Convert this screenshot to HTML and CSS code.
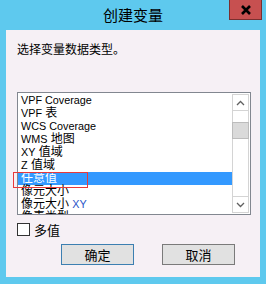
FILE: index.html
```html
<!DOCTYPE html>
<html lang="zh-CN">
<head>
    <meta charset="UTF-8">
    <title>创建变量</title>
    <link rel="stylesheet" href="styles.css">
</head>
<body>
    <div class="window">
        <div class="titlebar">
            <div class="title">创建变量</div>
            <div class="close-btn">
                <svg width="12" height="10" viewBox="0 0 12 10">
                    <path d="M2 1 L10 9 M10 1 L2 9" stroke="#000" stroke-width="2.6" fill="none"/>
                </svg>
            </div>
        </div>
        <div class="client">
            <div class="prompt">选择变量数据类型。</div>
            <div class="listbox">
                <div class="items">
                    <div class="item"><span class="en">VPF Coverage</span></div>
                    <div class="item"><span class="en">VPF</span> 表</div>
                    <div class="item"><span class="en">WCS Coverage</span></div>
                    <div class="item"><span class="en">WMS</span> 地图</div>
                    <div class="item"><span class="en">XY</span> 值域</div>
                    <div class="item"><span class="en">Z</span> 值域</div>
                    <div class="item selected">任意值</div>
                    <div class="item">像元大小</div>
                    <div class="item">像元大小 <span class="en xy">XY</span></div>
                    <div class="item">像素类型</div>
                </div>
                <div class="scrollbar">
                    <div class="sb-btn">
                        <svg width="9" height="6" viewBox="0 0 9 6"><path d="M1 5 L4.5 1.5 L8 5" stroke="#606060" stroke-width="1.3" fill="none"/></svg>
                    </div>
                    <div class="sb-track">
                        <div class="sb-thumb"></div>
                    </div>
                    <div class="sb-btn">
                        <svg width="9" height="6" viewBox="0 0 9 6"><path d="M1 1 L4.5 4.5 L8 1" stroke="#606060" stroke-width="1.3" fill="none"/></svg>
                    </div>
                </div>
                <div class="highlight-box"></div>
            </div>
            <label class="check-row">
                <span class="checkbox"></span>
                <span>多值</span>
            </label>
            <div class="buttons">
                <div class="btn default">确定</div>
                <div class="btn">取消</div>
            </div>
        </div>
    </div>
</body>
</html>
```

FILE: styles.css
```css
* {
    margin: 0;
    padding: 0;
    box-sizing: border-box;
}

body {
    width: 266px;
    height: 284px;
    overflow: hidden;
    font-family: "Liberation Sans", "Noto Sans CJK SC", sans-serif;
    font-size: 12px;
    color: #000;
}

.window {
    width: 266px;
    height: 284px;
    background: #5ec9ee;
    display: flex;
    flex-direction: column;
}

.titlebar {
    height: 30px;
    position: relative;
    display: flex;
    justify-content: center;
    align-items: center;
}

.title {
    font-size: 15px;
    color: #000;
    margin-top: -1px;
}

.close-btn {
    position: absolute;
    top: 0;
    left: 229px;
    width: 33px;
    height: 20px;
    background: #c75050;
    border: 1px solid #7a2f2f;
    border-top: none;
    display: flex;
    justify-content: center;
    align-items: center;
}

.client {
    margin: 0 6px;
    width: 254px;
    height: 247px;
    background: #f6f0f5;
    padding: 14px 9px 0 11px;
    display: flex;
    flex-direction: column;
}

.prompt {
    height: 13px;
    line-height: 13px;
}

.listbox {
    margin-top: 35px;
    width: 234px;
    height: 123px;
    border: 1px solid #828790;
    background: #fff;
    display: flex;
    position: relative;
}

.items {
    flex: 1;
    padding-top: 1px;
    overflow: hidden;
}

.item {
    height: 13px;
    line-height: 13px;
    padding-left: 3px;
    white-space: nowrap;
}

.en {
    font-size: 10.8px;
}

.item.selected {
    background: #3399ff;
    color: #fff;
}

.xy {
    color: #2a55c8;
}

.highlight-box {
    position: absolute;
    left: -5px;
    top: 79px;
    width: 75px;
    height: 16px;
    border: 1px solid #e8393a;
}

.scrollbar {
    width: 18px;
    display: flex;
    flex-direction: column;
    padding: 1px 1px 1px 0;
}

.sb-btn {
    height: 17px;
    border: 1px solid #d4d4d4;
    display: flex;
    justify-content: center;
    align-items: center;
}

.sb-track {
    flex: 1;
    padding-top: 11px;
    border-left: 1px solid #d4d4d4;
    border-right: 1px solid #d4d4d4;
}

.sb-thumb {
    height: 17px;
    background: #dadada;
    border: 1px solid #bcbcbc;
    margin: 0 -1px;
}

.check-row {
    margin-top: 8px;
    display: flex;
    align-items: center;
    gap: 4px;
    height: 13px;
    font-size: 13px;
}

.checkbox {
    width: 13px;
    height: 13px;
    border: 1px solid #333;
    background: #fff;
}

.buttons {
    margin-top: 8px;
    display: flex;
    gap: 28px;
    padding-left: 44px;
}

.btn {
    width: 73px;
    height: 21px;
    background: #e1e1e1;
    border: 1px solid #7a7a7a;
    display: flex;
    justify-content: center;
    align-items: center;
    font-size: 13px;
}

.btn.default {
    border-color: #3c7fb1;
}
```
